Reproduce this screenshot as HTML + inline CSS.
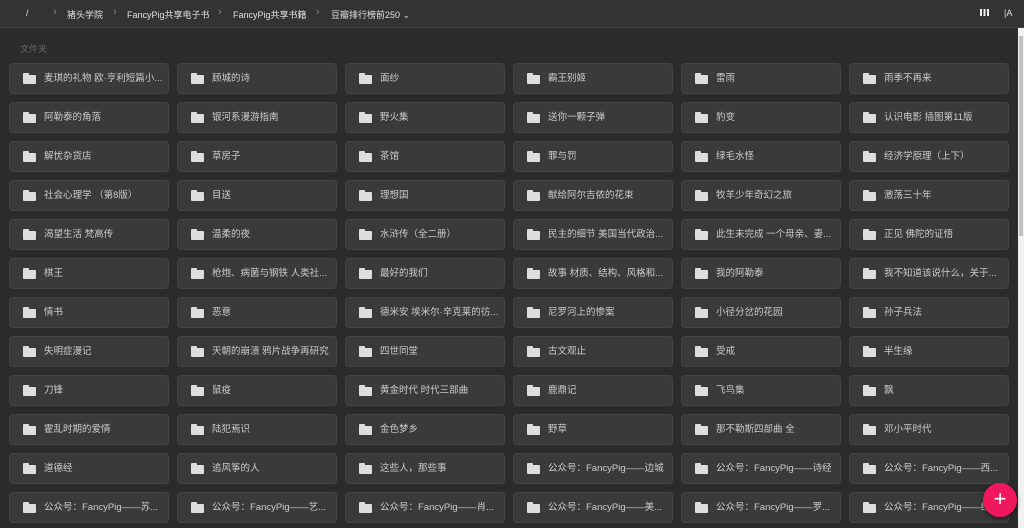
<!DOCTYPE html><html><head><meta charset="utf-8"><style>
*{margin:0;padding:0;box-sizing:border-box}
body{width:1024px;height:528px;overflow:hidden;background:#2b2b2b;font-family:"Liberation Sans","Noto Sans CJK SC",sans-serif;color:#d0d0d0;position:relative}
.hd{position:absolute;left:0;top:0;width:1024px;height:28px;background:#333;border-bottom:1px solid #444;font-size:9px;color:#e0e0e0}
.hd span{position:absolute;top:8px;white-space:nowrap}
.hd .ch{color:#888;font-size:11px;top:6px}
.lbl{position:absolute;left:20px;top:42px;font-size:9px;color:#666}
.c{position:absolute;width:160px;height:31px;background:#3a3a3a;border:1px solid #454545;border-radius:4px;font-size:9.5px;line-height:29px;padding-left:34px;white-space:nowrap;overflow:hidden;color:#ccc}
.c:before{content:"";position:absolute;left:13px;top:11px;width:13px;height:9px;background:#ddd;border-radius:1px}
.c:after{content:"";position:absolute;left:13px;top:9px;width:6px;height:3px;background:#ddd;border-radius:1px 1px 0 0}
.sb{position:absolute;right:0;top:28px;width:6px;height:500px;background:#f1f1f1}
.sb i{position:absolute;left:1px;top:8px;width:4px;height:200px;background:#c1c1c1}
.fab{position:absolute;left:983px;top:483px;width:34px;height:34px;border-radius:50%;background:#f0175e;color:#fff;text-align:center;line-height:32px;font-size:22px;box-shadow:0 2px 5px rgba(0,0,0,.5)}
</style></head><body>
<div class="hd">
<span style="left:26px">/</span>
<span class="ch" style="left:53px">›</span><span style="left:67px">猪头学院</span>
<span class="ch" style="left:113px">›</span><span style="left:127px">FancyPig共享电子书</span>
<span class="ch" style="left:218px">›</span><span style="left:233px">FancyPig共享书籍</span>
<span class="ch" style="left:316px">›</span><span style="left:331px">豆瓣排行榜前250 ⌄</span>
<span style="left:980px;top:9px;width:9px;height:7px;background:repeating-linear-gradient(90deg,#eee 0 2px,transparent 2px 3.5px)"></span>
<span style="left:1004px;font-size:9px">|A</span>
</div>
<div class="lbl">文件夹</div>
<div class="sb"><i></i></div>
<div id="g"></div>
<div class="fab">+</div>
<script>
var n=["麦琪的礼物 欧·亨利短篇小...","顾城的诗","面纱","霸王别姬","雷雨","雨季不再来","阿勒泰的角落","银河系漫游指南","野火集","送你一颗子弹","豹变","认识电影 插图第11版","解忧杂货店","草房子","茶馆","罪与罚","绿毛水怪","经济学原理（上下）","社会心理学 （第8版）","目送","理想国","献给阿尔吉侬的花束","牧羊少年奇幻之旅","激荡三十年","渴望生活 梵高传","温柔的夜","水浒传（全二册）","民主的细节 美国当代政治...","此生未完成 一个母亲、妻...","正见 佛陀的证悟","棋王","枪炮、病菌与钢铁 人类社...","最好的我们","故事 材质、结构、风格和...","我的阿勒泰","我不知道该说什么，关于...","情书","恶意","德米安 埃米尔·辛克莱的彷...","尼罗河上的惨案","小径分岔的花园","孙子兵法","失明症漫记","天朝的崩溃 鸦片战争再研究","四世同堂","古文观止","受戒","半生缘","刀锋","鼠疫","黄金时代 时代三部曲","鹿鼎记","飞鸟集","飘","霍乱时期的爱情","陆犯焉识","金色梦乡","野草","那不勒斯四部曲 全","邓小平时代","道德经","追风筝的人","这些人，那些事","公众号：FancyPig——边城","公众号：FancyPig——诗经","公众号：FancyPig——西...","公众号：FancyPig——苏...","公众号：FancyPig——艺...","公众号：FancyPig——肖...","公众号：FancyPig——美...","公众号：FancyPig——罗...","公众号：FancyPig——红..."];
var h="";n.forEach(function(t,i){h+='<div class="c" style="left:'+(9+(i%6)*168)+'px;top:'+(63+Math.floor(i/6)*39)+'px">'+t+'</div>'});
document.getElementById("g").innerHTML=h;
</script>
</body></html>
